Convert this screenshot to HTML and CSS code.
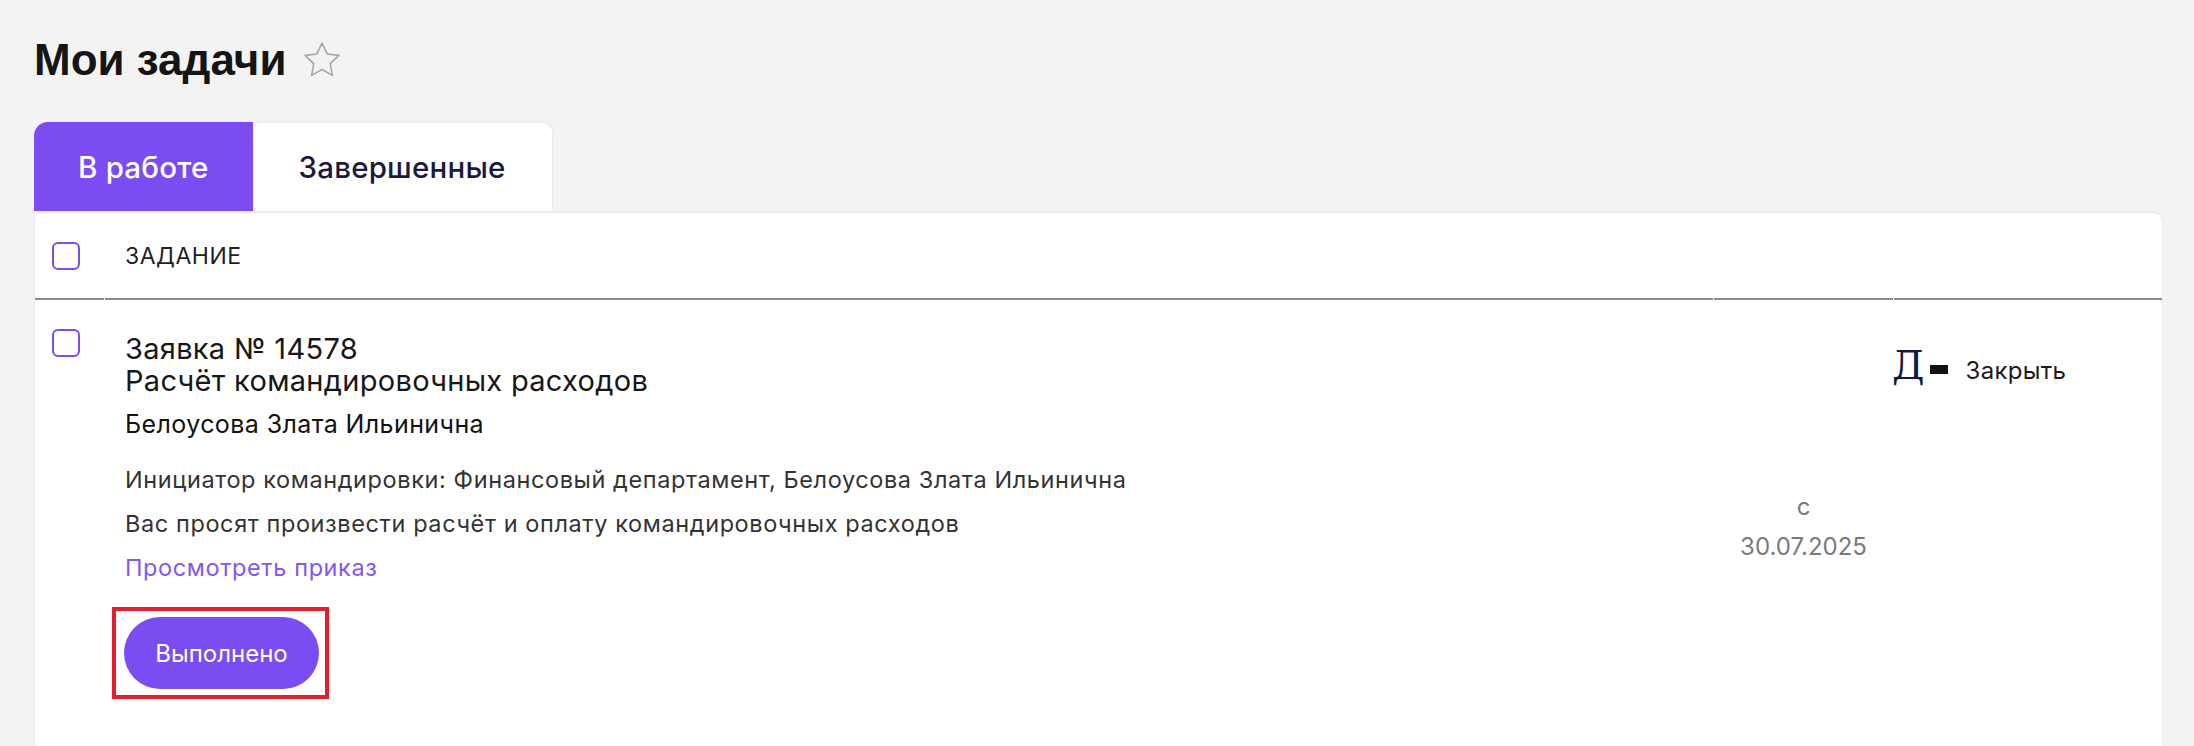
FILE: index.html
```html
<!DOCTYPE html>
<html lang="ru">
<head>
  <meta charset="UTF-8">
  <meta name="viewport" content="width=device-width, initial-scale=1.0">
  <title>Мои задачи</title>
  <link rel="stylesheet" href="styles.css">
</head>
<body>
  <div class="page-head">
    <h1>Мои задачи</h1>
    <svg class="fav" width="36" height="36" viewBox="2 2 20 20" aria-hidden="true">
      <path d="M12 2.6l2.85 6.05 6.55.8-4.85 4.55 1.25 6.55L12 17.3l-5.8 3.25 1.25-6.55L2.6 9.45l6.55-.8z" fill="none" stroke="#a3a8b0" stroke-width="0.9" stroke-linejoin="round"/>
    </svg>
  </div>

  <div class="tabs">
    <button class="tab active">В работе</button>
    <button class="tab">Завершенные</button>
  </div>

  <div class="card">
    <div class="grid head">
      <div class="cell check"><span class="box"></span></div>
      <div class="cell col-task">Задание</div>
      <div class="cell"></div>
      <div class="cell"></div>
    </div>

    <div class="grid row">
      <div class="cell check"><span class="box"></span></div>
      <div class="cell task">
        <div class="task-title">Заявка № 14578<br>Расчёт командировочных расходов</div>
        <div class="task-person">Белоусова Злата Ильинична</div>
        <div class="task-desc">
          <p>Инициатор командировки: Финансовый департамент, Белоусова Злата Ильинична</p>
          <p>Вас просят произвести расчёт и оплату командировочных расходов</p>
          <p><a href="#" class="link">Просмотреть приказ</a></p>
        </div>
        <div class="done-mark">
          <button class="btn-done">Выполнено</button>
        </div>
      </div>
      <div class="cell date">
        <div>с</div>
        <div>30.07.2025</div>
      </div>
      <div class="cell action">
        <span class="act-icon">Д</span><span class="act-dash"></span><span class="act-label">Закрыть</span>
      </div>
    </div>
  </div>
</body>
</html>
```

FILE: styles.css
```css
body {
  margin: 0;
  padding: 34px 31px 0 34px;
  background-color: #f3f3f3;
  font-family: Inter, "Noto Sans", sans-serif;
  color: #1b1b1b;
}

.page-head {
  display: flex;
  align-items: center;
  gap: 18px;
}

h1 {
  margin: 0;
  font-family: "Liberation Sans", Arial, sans-serif;
  font-weight: 700;
  font-size: 44px;
  line-height: 52px;
  color: #151515;
}

.fav {
  margin-top: -1px;
}

.tabs {
  display: flex;
  margin-top: 36px;
}

.tab {
  height: 89px;
  padding: 0 46px;
  border: 1px solid #e8eaf0;
  border-bottom: none;
  border-left: none;
  border-top-right-radius: 10px;
  background-color: #fff;
  font-family: Inter, "Noto Sans", sans-serif;
  font-weight: 500;
  font-size: 29.5px;
  letter-spacing: 0.2px;
  color: #1a1a3e;
  cursor: pointer;
}

.tab.active {
  padding: 0 44px;
  border: none;
  border-radius: 14px 0 0 0;
  background-color: #7b4cf2;
  color: #fff;
}

.card {
  min-height: 560px;
  background-color: #fff;
  border: 1px solid #e8ebf1;
  border-top-width: 2px;
  border-top-right-radius: 10px;
}

.grid {
  display: grid;
  grid-template-columns: 69px 1608px 179px 1fr;
  column-gap: 1px;
}

.head .cell {
  box-sizing: border-box;
  height: 87px;
  display: flex;
  align-items: center;
  border-bottom: 2px solid #8a8a8a;
}

.col-task {
  padding-left: 20px;
  font-size: 23px;
  letter-spacing: 0.5px;
  text-transform: uppercase;
  color: #1f1f1f;
}

.check {
  padding-left: 17px;
}

.row .check {
  padding-top: 29px;
}

.box {
  display: block;
  box-sizing: border-box;
  width: 28px;
  height: 28px;
  border: 2px solid #7b4cf2;
  border-radius: 6px;
}

.task {
  padding: 33px 0 40px 20px;
}

.task-title {
  font-size: 29px;
  line-height: 32px;
  letter-spacing: 0.3px;
  color: #171717;
}

.task-person {
  margin-top: 11px;
  font-size: 25px;
  line-height: 32px;
  letter-spacing: 0.4px;
  color: #111;
}

.task-desc {
  margin-top: 18px;
  font-size: 23.5px;
  line-height: 44px;
  letter-spacing: 0.6px;
  color: #333;
}

.task-desc p {
  margin: 0;
}

.link {
  color: #8456f5;
  text-decoration: none;
}

.done-mark {
  width: fit-content;
  margin: 17px 0 0 -13px;
  padding: 6px 6px 6px 8px;
  border: 4px solid #e31e2d;
}

.btn-done {
  display: block;
  width: 195px;
  height: 72px;
  border: none;
  border-radius: 36px;
  background-color: #7b4cf2;
  color: #fff;
  font-family: Inter, "Noto Sans", sans-serif;
  font-size: 24px;
  cursor: pointer;
}

.date {
  padding-top: 187px;
  text-align: center;
  font-size: 24px;
  line-height: 40px;
  color: #7a7a7a;
}

.action {
  padding-top: 45px;
  white-space: nowrap;
  font-size: 24px;
  line-height: 40px;
}

.act-icon {
  margin-left: -2px;
  font-family: "DejaVu Serif", serif;
  font-size: 40px;
  line-height: 40px;
  color: #15163f;
}

.act-dash {
  display: inline-block;
  width: 18px;
  height: 9px;
  margin-left: 5px;
  vertical-align: 5px;
  background-color: #111;
}

.act-label {
  margin-left: 18px;
  letter-spacing: 0.3px;
  color: #1b1b1b;
}
```
